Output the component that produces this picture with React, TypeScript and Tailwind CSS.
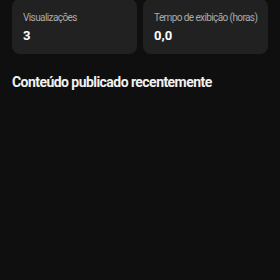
export default function App() {
  return (
    <div className="min-h-[280px] w-[280px] bg-[#0f0f0f] overflow-hidden" style={{ fontFamily: 'Roboto, "Noto Sans", sans-serif' }}>
      <div className="-mt-[1px] grid grid-cols-2 gap-[6px] px-3">
        <div className="rounded-[8px] bg-[#212121] pl-[11px] pr-2 pt-[13px] pb-[10px]">
          <div className="text-[10px] leading-[12px] tracking-[-0.6px] text-[#aaaaaa] whitespace-nowrap">Visualizações</div>
          <div className="mt-1 text-[13px] font-bold leading-4 text-white">3</div>
        </div>
        <div className="rounded-[8px] bg-[#212121] pl-[11px] pr-2 pt-[13px] pb-[10px]">
          <div className="text-[10px] leading-[12px] tracking-[-0.6px] text-[#aaaaaa] whitespace-nowrap">Tempo de exibição (horas)</div>
          <div className="mt-1 text-[13px] font-bold leading-4 text-white">0,0</div>
        </div>
      </div>
      <div className="px-3 pt-[18px] text-[14px] font-bold leading-5 tracking-[-0.55px] text-[#f1f1f1]">Conteúdo publicado recentemente</div>
    </div>
  );
}
